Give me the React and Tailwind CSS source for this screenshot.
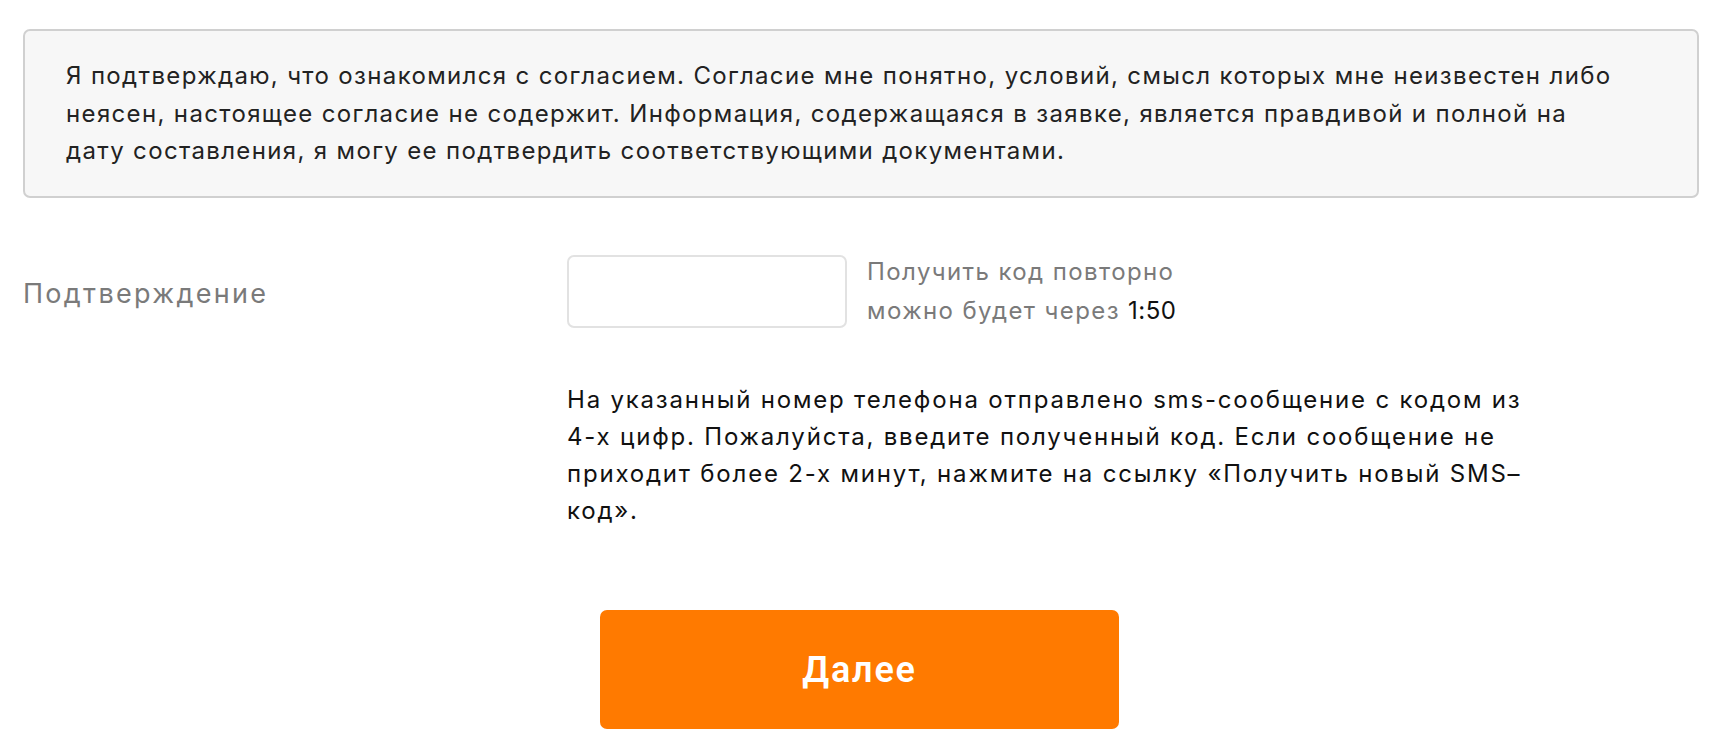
import React from "react";

const agreementLines = [
  "Я подтверждаю, что ознакомился с согласием. Согласие мне понятно, условий, смысл которых мне неизвестен либо",
  "неясен, настоящее согласие не содержит. Информация, содержащаяся в заявке, является правдивой и полной на",
  "дату составления, я могу ее подтвердить соответствующими документами.",
];

const hintLines = [
  "На указанный номер телефона отправлено sms-сообщение с кодом из",
  "4-х цифр. Пожалуйста, введите полученный код. Если сообщение не",
  "приходит более 2-х минут, нажмите на ссылку «Получить новый SMS–",
  "код».",
];

export default function App() {
  return (
    <div
      className="w-[1722px] h-[752px] bg-white px-[23px] pt-[29px]"
      style={{ fontFamily: "Inter, 'Noto Sans', sans-serif" }}
    >
      <div className="border-2 border-[#d0d0d0] rounded-[7px] bg-[#f7f7f7] pl-[41px] pt-[26px] h-[169px] text-[24px] leading-[37.5px] tracking-[1.35px] text-[#222222]">
        {agreementLines.map((line) => (
          <div key={line} className="whitespace-nowrap">
            {line}
          </div>
        ))}
      </div>

      <div className="flex mt-[57px]">
        <div className="w-[544px] pt-[19px] text-[27px] tracking-[2.3px] text-[#7a7a7a]">
          Подтверждение
        </div>
        <div>
          <div className="flex items-start">
            <input
              type="text"
              className="w-[280px] h-[73px] border-2 border-[#e2e2e2] rounded-[7px] bg-white focus:outline-none"
            />
            <div className="ml-[20px] -mt-[3px] text-[24px] leading-[39px] tracking-[1.4px] text-[#7a7a7a]">
              <div>Получить код повторно</div>
              <div>
                можно будет через <span className="text-[#111111] tracking-[0.5px]">1:50</span>
              </div>
            </div>
          </div>
          <div className="mt-[51px] text-[24px] leading-[37px] tracking-[1.8px] text-[#111111]">
            {hintLines.map((line) => (
              <div key={line} className="whitespace-nowrap">
                {line}
              </div>
            ))}
          </div>
          <button
            type="button"
            className="mt-[81px] ml-[33px] w-[519px] h-[119px] rounded-[7px] bg-[#ff7a00] text-white text-[36px] font-semibold tracking-[1.8px] cursor-pointer"
            style={{ fontFamily: "Roboto, 'Open Sans', sans-serif" }}
          >
            Далее
          </button>
        </div>
      </div>
    </div>
  );
}
